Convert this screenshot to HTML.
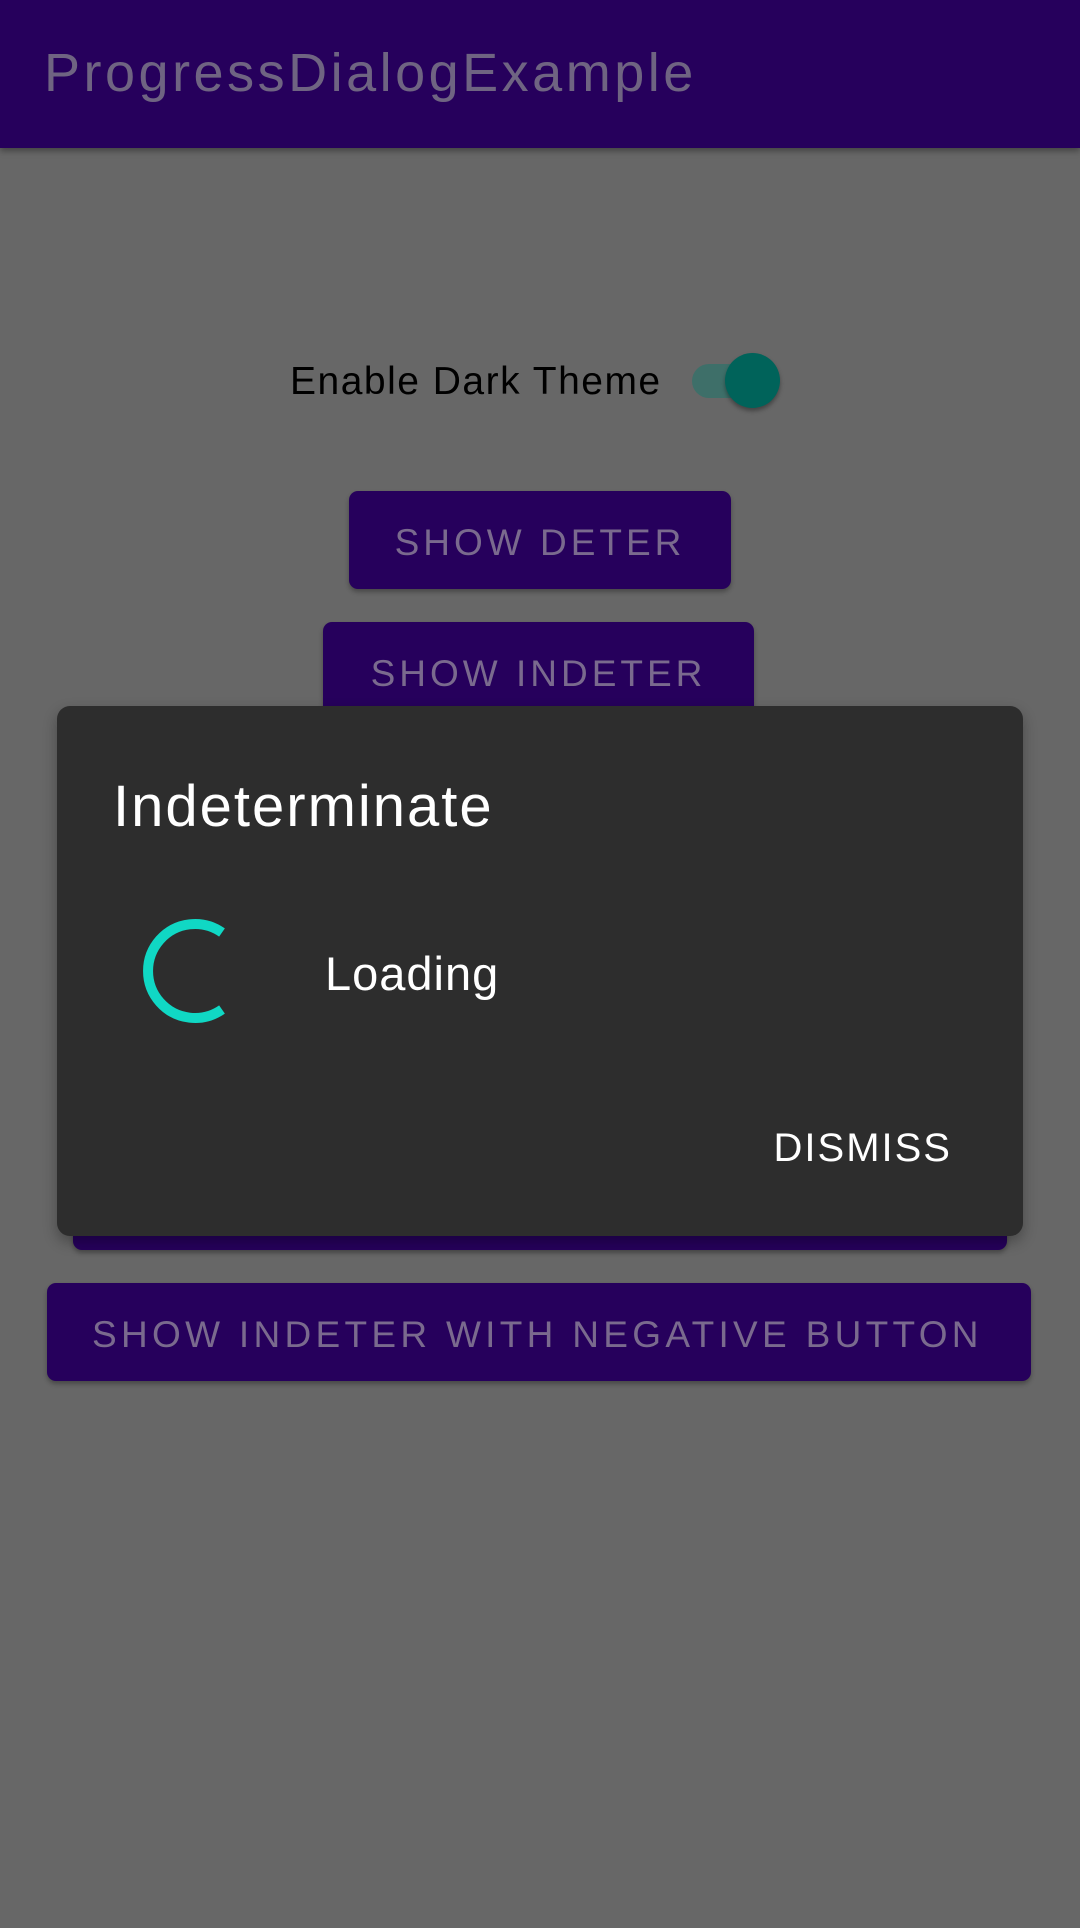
<!DOCTYPE html>
<html><head><meta charset="utf-8"><style>
html,body{margin:0;padding:0;}
body{width:1080px;height:1928px;background:#676767;position:relative;overflow:hidden;font-family:"Liberation Sans",sans-serif;}
.t{position:absolute;white-space:nowrap;line-height:1;}
.bar{position:absolute;left:0;top:0;width:1080px;height:148px;background:#26005c;box-shadow:0 3px 6px rgba(0,0,0,.35);}
.btn{position:absolute;background:#26005c;border-radius:9px;box-shadow:0 3px 5px rgba(0,0,0,.3);}
.bt{position:absolute;left:0;right:0;text-align:center;color:#7a6a8e;font-size:37px;letter-spacing:4px;line-height:1;white-space:nowrap;}
</style></head><body>
<div class="bar"></div>
<div class="t" style="left:44px;top:46px;font-size:54px;letter-spacing:3.5px;color:#6f6482;">ProgressDialogExample</div>

<div class="t" style="left:290px;top:362px;font-size:39px;letter-spacing:1.5px;color:#000;">Enable Dark Theme</div>
<div style="position:absolute;left:692px;top:364px;width:70px;height:34px;border-radius:17px;background:#3e6f69;"></div>
<div style="position:absolute;left:725px;top:353px;width:55px;height:55px;border-radius:50%;background:#00635a;box-shadow:0 3px 4px rgba(0,0,0,.35);"></div>

<div class="btn" style="left:349px;top:491px;width:382px;height:98px;"><div class="bt" style="top:33px;">SHOW DETER</div></div>
<div class="btn" style="left:323px;top:622px;width:431px;height:98px;"><div class="bt" style="top:33px;">SHOW INDETER</div></div>
<div class="btn" style="left:73px;top:1150px;width:934px;height:100px;"></div>
<div class="btn" style="left:47px;top:1283px;width:984px;height:98px;"></div>
<div class="t" style="left:92px;top:1316px;width:889px;text-align:center;color:#7a6a8e;font-size:37px;letter-spacing:4.3px;">SHOW INDETER WITH NEGATIVE BUTTON</div>

<div style="position:absolute;left:57px;top:706px;width:966px;height:530px;background:#2d2d2d;border-radius:13px;box-shadow:0 6px 14px rgba(0,0,0,.3);"></div>
<div class="t" style="left:113px;top:778px;font-size:58px;letter-spacing:2px;color:#fff;">Indeterminate</div>
<svg style="position:absolute;left:0;top:0;" width="1080" height="1928">
<path d="M222 932.5 A47 47 0 1 0 222 1009.5" fill="none" stroke="#10d8c4" stroke-width="10"/>
</svg>
<div class="t" style="left:325px;top:950px;font-size:47px;letter-spacing:1px;color:#fff;">Loading</div>
<div class="t" style="left:752px;top:1128px;width:200px;text-align:right;font-size:40px;letter-spacing:2px;color:#fff;">DISMISS</div>
</body></html>
